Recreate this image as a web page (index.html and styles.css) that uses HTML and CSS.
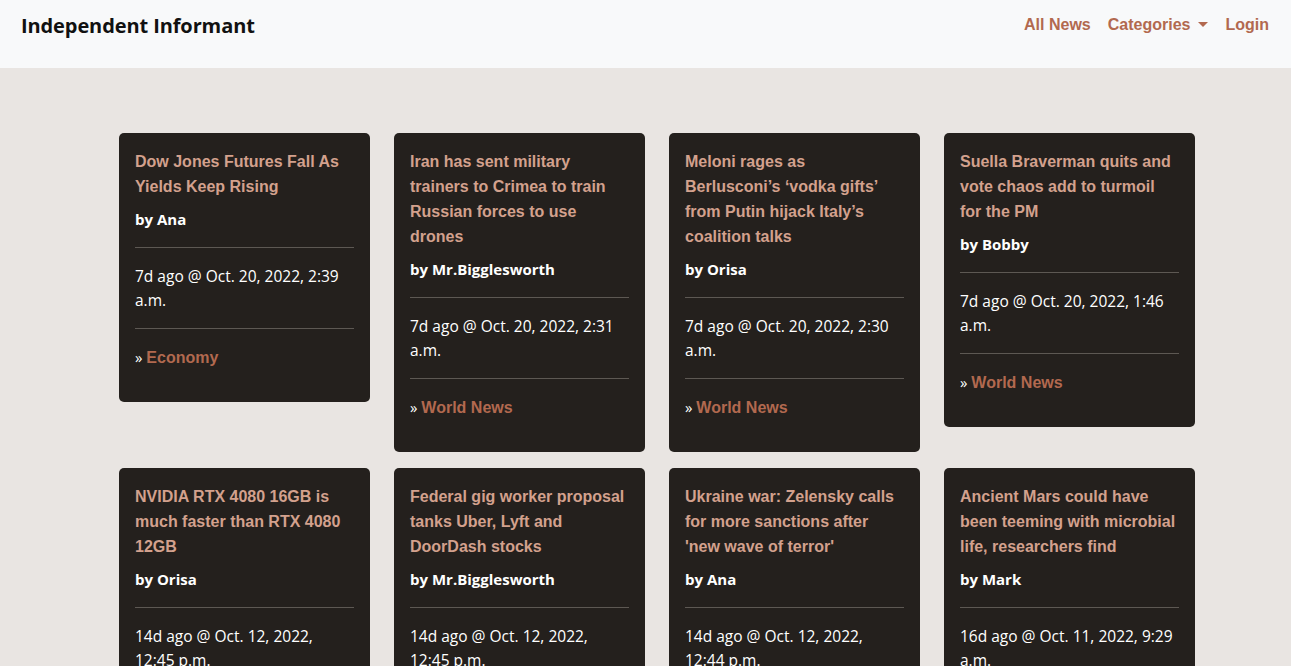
FILE: index.html
```html
<!DOCTYPE html>
<html lang="en">
<head>
<meta charset="utf-8">
<title>Independent Informant</title>
<link rel="stylesheet" href="styles.css">
</head>
<body>
<nav class="navbar">
  <a class="brand" href="#">Independent Informant</a>
  <ul class="nav-links">
    <li><a href="#">All News</a></li>
    <li><a href="#" class="dropdown-toggle">Categories</a></li>
    <li><a href="#">Login</a></li>
  </ul>
</nav>
<main class="content">
  <div class="grid">
    <article class="card">
      <h5 class="title">Dow Jones Futures Fall As Yields Keep Rising</h5>
      <p class="author">by Ana</p>
      <hr>
      <p class="date">7d ago @ Oct. 20, 2022, 2:39 a.m.</p>
      <hr>
      <p class="cat">» <a href="#">Economy</a></p>
    </article>
    <article class="card">
      <h5 class="title">Iran has sent military trainers to Crimea to train Russian forces to use drones</h5>
      <p class="author">by Mr.Bigglesworth</p>
      <hr>
      <p class="date">7d ago @ Oct. 20, 2022, 2:31 a.m.</p>
      <hr>
      <p class="cat">» <a href="#">World News</a></p>
    </article>
    <article class="card">
      <h5 class="title">Meloni rages as Berlusconi’s ‘vodka gifts’ from Putin hijack Italy’s coalition talks</h5>
      <p class="author">by Orisa</p>
      <hr>
      <p class="date">7d ago @ Oct. 20, 2022, 2:30 a.m.</p>
      <hr>
      <p class="cat">» <a href="#">World News</a></p>
    </article>
    <article class="card">
      <h5 class="title">Suella Braverman quits and vote chaos add to turmoil for the PM</h5>
      <p class="author">by Bobby</p>
      <hr>
      <p class="date">7d ago @ Oct. 20, 2022, 1:46 a.m.</p>
      <hr>
      <p class="cat">» <a href="#">World News</a></p>
    </article>
    <article class="card">
      <h5 class="title">NVIDIA RTX 4080 16GB is much faster than RTX 4080 12GB</h5>
      <p class="author">by Orisa</p>
      <hr>
      <p class="date">14d ago @ Oct. 12, 2022, 12:45 p.m.</p>
      <hr>
      <p class="cat">» <a href="#">Technology</a></p>
    </article>
    <article class="card">
      <h5 class="title">Federal gig worker proposal tanks Uber, Lyft and DoorDash stocks</h5>
      <p class="author">by Mr.Bigglesworth</p>
      <hr>
      <p class="date">14d ago @ Oct. 12, 2022, 12:45 p.m.</p>
      <hr>
      <p class="cat">» <a href="#">Economy</a></p>
    </article>
    <article class="card">
      <h5 class="title">Ukraine war: Zelensky calls for more sanctions after 'new wave of terror'</h5>
      <p class="author">by Ana</p>
      <hr>
      <p class="date">14d ago @ Oct. 12, 2022, 12:44 p.m.</p>
      <hr>
      <p class="cat">» <a href="#">World News</a></p>
    </article>
    <article class="card">
      <h5 class="title">Ancient Mars could have been teeming with microbial life, researchers find</h5>
      <p class="author">by Mark</p>
      <hr>
      <p class="date">16d ago @ Oct. 11, 2022, 9:29 a.m.</p>
      <hr>
      <p class="cat">» <a href="#">Science</a></p>
    </article>
  </div>
</main>
</body>
</html>
```

FILE: styles.css
```css
* { box-sizing: border-box; }
html, body { margin: 0; padding: 0; }
body {
  background: #e9e5e2;
  font-family: "Open Sans", "Noto Sans", sans-serif;
  font-size: 16px;
  color: #fff;
}
a { text-decoration: none; }

.navbar {
  height: 68px;
  background: #f8f9fa;
  display: flex;
  justify-content: space-between;
  align-items: flex-start;
  padding: 0 22px 0 21px;
}
.brand {
  font-family: "Open Sans", sans-serif;
  font-weight: 700;
  font-size: 20px;
  line-height: 30px;
  margin-top: 11px;
  color: #111;
  letter-spacing: -0.1px;
}
.nav-links {
  list-style: none;
  margin: 13px 0 0 0;
  padding: 0;
  display: flex;
  gap: 17px;
}
.nav-links a {
  font-family: "Liberation Sans", Arial, sans-serif;
  font-weight: 700;
  font-size: 16px;
  line-height: 24px;
  color: #b2694f;
  display: inline-block;
}
.dropdown-toggle::after {
  content: "";
  display: inline-block;
  margin-left: 8px;
  vertical-align: 3px;
  border-top: 5px solid #b2694f;
  border-left: 5px solid transparent;
  border-right: 5px solid transparent;
}

.content {
  padding: 65px 0 40px 119px;
}
.grid {
  display: grid;
  grid-template-columns: repeat(4, 251px);
  column-gap: 24px;
  row-gap: 16px;
  align-items: start;
}
.card {
  background: #24201d;
  border-radius: 5px;
  padding: 16px 16px 16px;
}
.title {
  font-family: "Liberation Sans", Arial, sans-serif;
  font-weight: 700;
  font-size: 16px;
  line-height: 25px;
  color: #d3a18d;
  margin: 0 0 8px;
}
.author {
  font-weight: 700;
  font-size: 15px;
  line-height: 24px;
  margin: 0;
  color: #fff;
}
.card hr {
  border: 0;
  border-top: 1px solid #5d5853;
  margin: 16px 0;
}
.date {
  font-size: 15.5px;
  line-height: 24px;
  margin: 0;
  color: #fff;
}
.cat {
  margin: 0 0 16px;
  font-size: 15px;
  line-height: 24px;
  color: #fff;
}
.cat a {
  font-family: "Liberation Sans", Arial, sans-serif;
  font-weight: 700;
  font-size: 16px;
  color: #b2694f;
}
```
